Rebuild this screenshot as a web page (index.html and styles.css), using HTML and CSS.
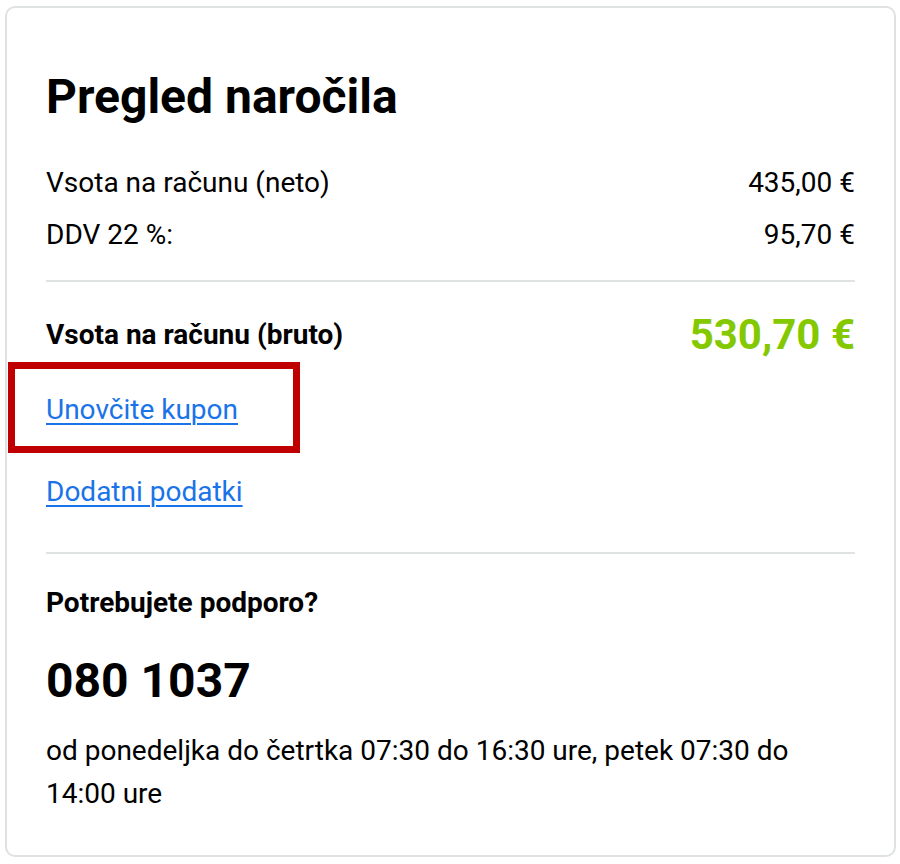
FILE: index.html
```html
<!DOCTYPE html>
<html lang="sl">
<head>
<meta charset="utf-8">
<title>Pregled naročila</title>
<link rel="stylesheet" href="styles.css">
</head>
<body>
<div class="card">
  <h1 class="title">Pregled naročila</h1>
  <div class="row"><span>Vsota na računu (neto)</span><span>435,00 €</span></div>
  <div class="row"><span>DDV 22 %:</span><span>95,70 €</span></div>
  <hr class="divider">
  <div class="total"><span class="total-label">Vsota na računu (bruto)</span><span class="total-price">530,70 €</span></div>
  <div class="link-row highlighted"><a href="#" class="link">Unovčite kupon</a><span class="marker"></span></div>
  <div class="link-row"><a href="#" class="link">Dodatni podatki</a></div>
  <hr class="divider divider-low">
  <div class="support-title">Potrebujete podporo?</div>
  <div class="phone">080 1037</div>
  <p class="hours">od ponedeljka do četrtka 07:30 do 16:30 ure, petek 07:30 do 14:00 ure</p>
</div>
</body>
</html>
```

FILE: styles.css
```css
* { box-sizing: border-box; }
html, body { margin: 0; padding: 0; background: #fff; }
body {
  font-family: Roboto, "Liberation Sans", sans-serif;
  color: #000;
  padding: 6px 5px 0 5px;
}
.card {
  width: 891px;
  height: 851px;
  border: 2px solid #dfe2e2;
  border-radius: 10px;
  padding: 0 39px;
  position: relative;
}
.title {
  margin: 61px 0 0 0;
  font-size: 48px;
  font-weight: 700;
  line-height: 56px;
}
.row {
  display: flex;
  justify-content: space-between;
  font-size: 28px;
  line-height: 52px;
}
.row:first-of-type { margin-top: 32px; }
.divider {
  border: 0;
  border-top: 2px solid #dfe3e3;
  margin: 19px 0 0 0;
}
.total {
  display: flex;
  justify-content: space-between;
  align-items: center;
  margin-top: 28px;
  line-height: 50px;
}
.total-label { font-size: 28px; font-weight: 700; }
.total-price { font-size: 42px; font-weight: 700; color: #84c800; }
.link-row {
  position: relative;
  font-size: 28px;
  line-height: 82px;
}
.highlighted { margin-top: 9px; }
.link { color: #1a73e8; text-decoration: underline; text-underline-offset: 4px; text-decoration-thickness: 2px; }
.marker {
  position: absolute;
  left: -38px;
  top: -7px;
  width: 292px;
  height: 91px;
  border: 7px solid #c00000;
}
.divider-low { margin-top: 19px; }
.support-title { font-size: 28px; font-weight: 700; margin-top: 32px; }
.phone { font-size: 48px; font-weight: 700; margin-top: 33px; }
.hours { font-size: 28px; line-height: 42.5px; margin: 21px 0 0 0; }
```
